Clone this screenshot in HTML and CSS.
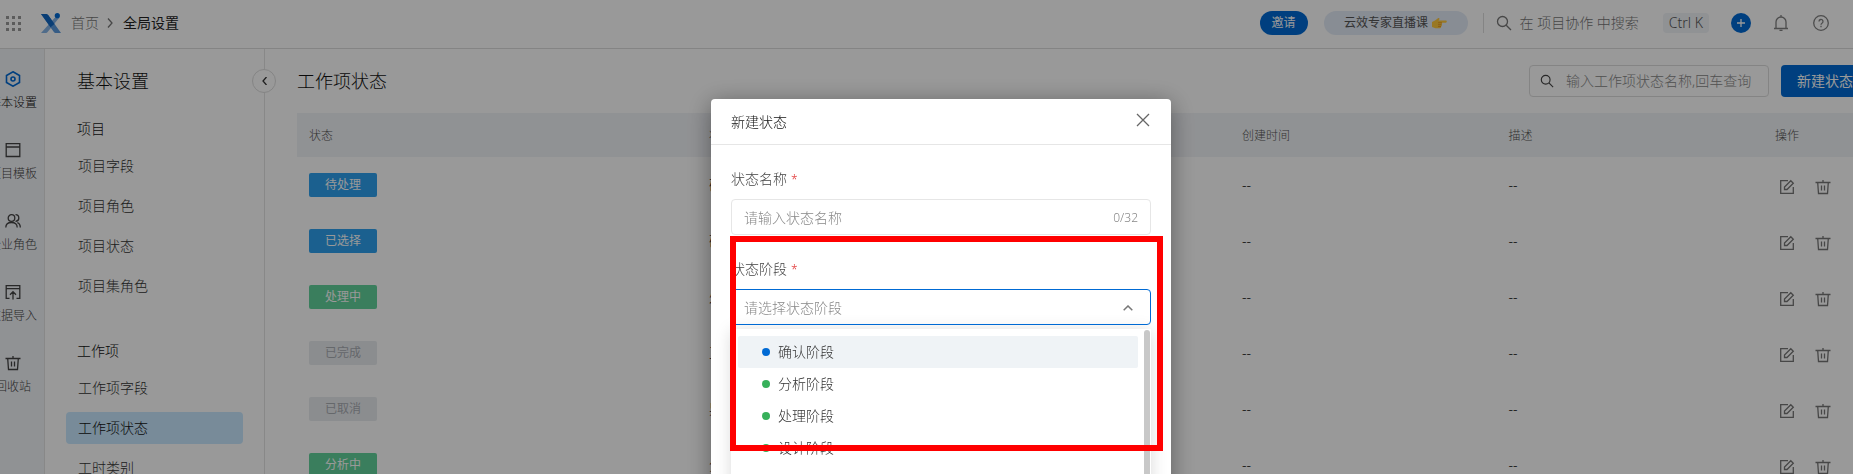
FILE: index.html
```html
<!DOCTYPE html>
<html lang="zh-CN">

<head>
    <meta charset="utf-8">
    <title>全局设置</title>
    <link rel="stylesheet" href="styles.css">
</head>

<body>
    <!-- 公用图标 -->
    <svg class="sprite" aria-hidden="true">
        <symbol id="i-search" viewBox="0 0 16 16"><circle cx="6.5" cy="6.5" r="5"/><path d="M10.2 10.2L15 15"/></symbol>
        <symbol id="i-trash" viewBox="0 0 16 16"><path d="M.5 3.500h15M8 1v2.500M2.700 3.500l.8 11h9l.8-11M6.500 6.500v5M9.500 6.500v5"/></symbol>
        <symbol id="i-edit" viewBox="0 0 16 16"><path d="M9 1.700H1.700v12.600h12.600V8M5.500 10.500V8l6.300-6.300 2.500 2.500L8 10.500z"/></symbol>
    </svg>

    <header class="header">
        <svg class="apps" viewBox="0 0 15 15" aria-hidden="true"><path d="M0 0h3v3H0zM6 0h3v3H6zM12 0h3v3h-3zM0 6h3v3H0zM6 6h3v3H6zM12 6h3v3h-3zM0 12h3v3H0zM6 12h3v3H6zM12 12h3v3h-3z"/></svg>
        <svg class="logo" viewBox="0 0 20 20" aria-hidden="true">
            <path d="M13.500 5H18L7 18.500C6.200 19.500 5.500 20 4.300 20H0z" fill="#86b4e6"/>
            <path d="M0 1h4.500c1.500 0 2.300.5 3 1.500L20 20h-4.500c-1.500 0-2.300-.5-3-1.500z" fill="#5a9ade"/>
            <path d="M0 1h4.500c1.500 0 2.300.5 3 1.500L13.500 11 9.500 14.300z" fill="#1268c4"/>
            <circle cx="16.300" cy="2.700" r="2.600" fill="#006ad4"/>
        </svg>
        <nav class="crumbs">
            <a href="#">首页</a>
            <svg class="crumb-arrow" viewBox="0 0 6 10" aria-hidden="true"><path d="M1 .5L5 5 1 9.500"/></svg>
            <a href="#" class="current">全局设置</a>
        </nav>
        <button class="invite" type="button">邀请</button>
        <a href="#" class="live">云效专家直播课
            <svg class="hand" viewBox="0 0 15 11" aria-hidden="true"><path d="M0 4l3-1.500L6 .3c1-.6 2 .3 1.300 1.200L6.500 2.500h7.300c1.300 0 1.300 2.200 0 2.200H9.500c1 .6.8 1.800 0 2 .6.700.3 1.600-.5 1.800.3.900-.2 1.700-1.200 1.700H3.500L0 9z" fill="#ffc83d"/><path d="M6 4.700h4M6 6.700h3.500M6 8.500h3" stroke="#e08a1e" stroke-width=".7"/></svg>
        </a>
        <button class="global-search" type="button">
            <svg class="icon" aria-hidden="true"><use href="#i-search"/></svg>
            <span>在 项目协作 中搜索</span>
            <kbd>Ctrl K</kbd>
        </button>
        <button class="plus" type="button" aria-label="新建"><svg viewBox="0 0 8 8" aria-hidden="true"><path d="M4 0v8M0 4h8"/></svg></button>
        <button class="icon-btn" type="button" aria-label="通知"><svg class="icon" viewBox="0 0 16 16" aria-hidden="true"><path d="M1 13.500h14M3 13.500V7a5 5 0 0 1 10 0v6.500M8 0v2M6.500 15.500h3"/></svg></button>
        <button class="icon-btn" type="button" aria-label="帮助"><svg class="icon" viewBox="0 0 16 16" aria-hidden="true"><circle cx="8" cy="8" r="7.300"/><path d="M6 6.500a2 2 0 1 1 3 1.700c-.7.400-1 .7-1 1.500M8 10.800v1.400"/></svg></button>
    </header>

    <div class="page">
        <nav class="rail">
            <a href="#" class="active"><svg class="icon" viewBox="0 0 16 16" aria-hidden="true"><path d="M8 .8l6.500 3.700v7L8 15.200l-6.500-3.700v-7z"/><circle cx="8" cy="8" r="2"/></svg>基本设置</a>
            <a href="#"><svg class="icon" viewBox="0 0 16 16" aria-hidden="true"><path d="M1.200 1.700h13.600v12.800H1.200zM1.200 5h13.600"/></svg>项目模板</a>
            <a href="#"><svg class="icon" viewBox="0 0 16 16" aria-hidden="true"><circle cx="6.500" cy="5" r="3.300"/><path d="M.8 14.500c0-3.200 2-5 5.700-5s5.700 1.800 5.700 5M10.500 1.700a3.300 3.300 0 0 1 0 6.600M12.300 9.700c2 .7 3 2.300 3 4.800"/></svg>企业角色</a>
            <a href="#"><svg class="icon" viewBox="0 0 16 16" aria-hidden="true"><path d="M4.500 14.300H1.200V1.700h13.600v12.600h-3.300M1.200 4.700h13.600M8 15.500V8M5 10.700L8 7.700l3 3"/></svg>数据导入</a>
            <a href="#"><svg class="icon" aria-hidden="true"><use href="#i-trash"/></svg>回收站</a>
        </nav>

        <aside class="sidebar">
            <h2>基本设置</h2>
            <button class="toggle" type="button" aria-label="收起"><svg viewBox="0 0 5 8" aria-hidden="true"><path d="M4.500 0L1 4l3.500 4"/></svg></button>
            <h3>项目</h3>
            <ul>
                <li><a href="#">项目字段</a></li>
                <li><a href="#">项目角色</a></li>
                <li><a href="#">项目状态</a></li>
                <li><a href="#">项目集角色</a></li>
            </ul>
            <h3>工作项</h3>
            <ul>
                <li><a href="#">工作项字段</a></li>
                <li><a href="#" class="active">工作项状态</a></li>
                <li><a href="#">工时类别</a></li>
            </ul>
        </aside>

        <main class="main">
            <div class="toolbar">
                <h1>工作项状态</h1>
                <label class="search">
                    <svg class="icon" aria-hidden="true"><use href="#i-search"/></svg>
                    <input type="text" aria-label="搜索状态" placeholder="输入工作项状态名称,回车查询">
                </label>
                <button class="primary" type="button">新建状态</button>
            </div>
            <table class="list">
                <colgroup>
                    <col class="col-status"><col><col><col><col><col class="col-action">
                </colgroup>
                <thead>
                    <tr><th>状态</th><th>状态阶段</th><th></th><th>创建时间</th><th>描述</th><th>操作</th></tr>
                </thead>
                <tbody>
                    <tr>
                        <td><span class="tag blue">待处理</span></td><td>确认阶段</td><td></td><td>--</td><td>--</td>
                        <td><div class="actions"><button type="button" aria-label="编辑"><svg class="icon"><use href="#i-edit"/></svg></button><button type="button" aria-label="删除"><svg class="icon"><use href="#i-trash"/></svg></button></div></td>
                    </tr>
                    <tr>
                        <td><span class="tag blue">已选择</span></td><td>确认阶段</td><td></td><td>--</td><td>--</td>
                        <td><div class="actions"><button type="button" aria-label="编辑"><svg class="icon"><use href="#i-edit"/></svg></button><button type="button" aria-label="删除"><svg class="icon"><use href="#i-trash"/></svg></button></div></td>
                    </tr>
                    <tr>
                        <td><span class="tag green">处理中</span></td><td>处理阶段</td><td></td><td>--</td><td>--</td>
                        <td><div class="actions"><button type="button" aria-label="编辑"><svg class="icon"><use href="#i-edit"/></svg></button><button type="button" aria-label="删除"><svg class="icon"><use href="#i-trash"/></svg></button></div></td>
                    </tr>
                    <tr>
                        <td><span class="tag gray">已完成</span></td><td>正常结束</td><td></td><td>--</td><td>--</td>
                        <td><div class="actions"><button type="button" aria-label="编辑"><svg class="icon"><use href="#i-edit"/></svg></button><button type="button" aria-label="删除"><svg class="icon"><use href="#i-trash"/></svg></button></div></td>
                    </tr>
                    <tr>
                        <td><span class="tag gray">已取消</span></td><td>异常结束</td><td></td><td>--</td><td>--</td>
                        <td><div class="actions"><button type="button" aria-label="编辑"><svg class="icon"><use href="#i-edit"/></svg></button><button type="button" aria-label="删除"><svg class="icon"><use href="#i-trash"/></svg></button></div></td>
                    </tr>
                    <tr>
                        <td><span class="tag green">分析中</span></td><td>分析阶段</td><td></td><td>--</td><td>--</td>
                        <td><div class="actions"><button type="button" aria-label="编辑"><svg class="icon"><use href="#i-edit"/></svg></button><button type="button" aria-label="删除"><svg class="icon"><use href="#i-trash"/></svg></button></div></td>
                    </tr>
                </tbody>
            </table>
        </main>
    </div>

    <!-- 新建状态弹窗 -->
    <div class="mask">
        <form class="modal" role="dialog" aria-labelledby="modal-title">
            <div class="modal-head">
                <h2 id="modal-title">新建状态</h2>
                <button class="close" type="button" aria-label="关闭"><svg viewBox="0 0 14 14" aria-hidden="true"><path d="M1 1l12 12M13 1L1 13"/></svg></button>
            </div>
            <div class="modal-body">
                <label class="field-label" for="status-name">状态名称<i>*</i></label>
                <div class="field">
                    <input id="status-name" type="text" maxlength="32" placeholder="请输入状态名称">
                    <span class="count">0/32</span>
                </div>
                <label class="field-label" for="status-stage">状态阶段<i>*</i></label>
                <div class="field open">
                    <select id="status-stage">
                        <option>请选择状态阶段</option>
                    </select>
                    <svg class="arrow" viewBox="0 0 10 6" aria-hidden="true"><path d="M.7 5.300L5 1l4.300 4.300"/></svg>
                </div>
                <div class="dropdown">
                    <ul>
                        <li class="hover"><span class="dot dot-blue"></span>确认阶段</li>
                        <li><span class="dot"></span>分析阶段</li>
                        <li><span class="dot"></span>处理阶段</li>
                        <li><span class="dot"></span>设计阶段</li>
                    </ul>
                    <div class="scrollbar"></div>
                </div>
                <div class="highlight"></div>
            </div>
        </form>
    </div>
</body>

</html>
```
FILE: styles.css
```css
* {
    box-sizing: border-box;
}

body {
    margin: 0;
    height: 100vh;
    overflow: hidden;
    background: #fff;
    color: #333;
    font: 300 14px/20px "Noto Sans", "Noto Sans CJK SC", sans-serif;
}

h1, h2, h3, ul {
    margin: 0;
    padding: 0;
    font-weight: inherit;
    list-style: none;
}

a {
    color: inherit;
    text-decoration: none;
}

button, input, select {
    margin: 0;
    padding: 0;
    border: 0;
    background: none;
    color: inherit;
    font: inherit;
    outline: 0;
}

::placeholder {
    color: #888;
    opacity: 1;
}

svg {
    display: block;
    flex: none;
    fill: none;
    stroke: currentColor;
    stroke-width: 1.3;
}

.sprite {
    position: absolute;
    width: 0;
    height: 0;
}

.icon {
    width: 16px;
    height: 16px;
}

/* 顶部导航 */
.header {
    display: flex;
    align-items: center;
    height: 49px;
    padding: 0 24px 2px 6px;
    border-bottom: 1px solid #dcdcdc;
}

.apps {
    width: 15px;
    height: 15px;
    margin-right: 20px;
    fill: #999;
    stroke: none;
}

.logo {
    width: 20px;
    height: 20px;
    margin-right: 10px;
    stroke: none;
}

.crumbs {
    display: flex;
    align-items: center;
    gap: 8px;
    margin-right: auto;
    color: #777;
}

.crumbs .current {
    margin-left: 2px;
    color: #222;
    font-weight: 400;
}

.crumb-arrow {
    width: 6px;
    height: 10px;
}

.invite {
    width: 48px;
    height: 24px;
    border-radius: 12px;
    background: #006ad4;
    color: #fff;
    font-size: 12px;
    font-weight: 400;
}

.live {
    display: flex;
    align-items: center;
    justify-content: center;
    gap: 4px;
    width: 144px;
    height: 24px;
    margin: 0 15px 0 16px;
    border-radius: 12px;
    background: #e3ebf7;
    color: #555;
    font-size: 12px;
    font-weight: 400;
}

.hand {
    width: 15px;
    height: 11px;
    stroke: none;
}

.global-search {
    display: flex;
    align-items: center;
    height: 20px;
    padding-left: 12px;
    border-left: 1px solid #ddd;
    color: #777;
}

.global-search span {
    margin: 0 24px 0 8px;
}

kbd {
    padding: 0 6px;
    border-radius: 4px;
    background: #f1f3f7;
    color: #555;
    font: inherit;
}

.plus {
    display: grid;
    place-items: center;
    width: 20px;
    height: 20px;
    margin-left: 22px;
    border-radius: 50%;
    background: #006ad4;
    color: #fff;
}

.plus svg {
    width: 8px;
    height: 8px;
}

.icon-btn {
    margin-left: 22px;
    color: #808080;
}

.icon-btn + .icon-btn {
    margin-left: 24px;
}

/* 页面主体比窗口略宽，向左滚动了一段 */
.page {
    display: flex;
    height: calc(100vh - 49px);
    margin: 0 -16px 0 -18px;
}

.rail {
    display: flex;
    flex: none;
    flex-direction: column;
    align-items: center;
    gap: 29px;
    width: 63px;
    padding-top: 22px;
    border-right: 1px solid #e3e3e3;
    background: #f1f3f7;
    color: #444;
    font-size: 12px;
}

.rail a {
    display: flex;
    flex-direction: column;
    align-items: center;
    gap: 6px;
}

.rail .active {
    color: #111;
}

.rail .active svg {
    color: #006ad4;
    stroke-width: 1.6;
}

.sidebar {
    position: relative;
    flex: none;
    width: 220px;
    padding: 20px 21px 0;
    border-right: 1px solid #e3e3e3;
}

.sidebar h2, .toolbar h1 {
    color: #111;
    font-size: 18px;
    line-height: 24px;
}

.sidebar h2 {
    padding-left: 11px;
}

.sidebar h3 {
    padding: 26px 11px 11px;
    color: #111;
    font-size: 14px;
}

.sidebar ul {
    display: grid;
    gap: 8px;
    margin-bottom: 13px;
}

.sidebar li a {
    display: block;
    padding: 6px 12px;
    border-radius: 4px;
}

.sidebar .active {
    background: #c8e8ff;
    color: #111;
}

.toggle {
    position: absolute;
    top: 20px;
    right: -12px;
    display: grid;
    place-items: center;
    width: 24px;
    height: 24px;
    border: 1px solid #ddd;
    border-radius: 50%;
    background: #fff;
}

.toggle svg {
    width: 5px;
    height: 8px;
}

/* 状态列表 */
.main {
    flex: 1;
    min-width: 0;
    padding: 16px 0 0 32px;
}

.toolbar {
    display: flex;
    align-items: center;
    margin-bottom: 16px;
}

.toolbar h1 {
    margin-right: auto;
}

.search {
    display: flex;
    align-items: center;
    gap: 12px;
    width: 240px;
    height: 32px;
    padding: 0 10px;
    border: 1px solid #ddd;
    border-radius: 4px;
}

.search .icon {
    width: 14px;
    height: 14px;
    color: #444;
}

.search input {
    flex: 1;
    min-width: 0;
}

.primary {
    width: 88px;
    height: 32px;
    margin-left: 12px;
    border-radius: 4px;
    background: #006ad4;
    color: #fff;
    font-weight: 400;
}

.list {
    width: 100%;
    border-collapse: collapse;
    table-layout: fixed;
}

.col-status {
    width: 400px;
}

.col-action {
    width: 106px;
}

.list th {
    height: 44px;
    padding: 2px 12px 0;
    background: #f1f3f7;
    color: #555;
    font-size: 12px;
    font-weight: 300;
    text-align: left;
}

.list td {
    height: 56px;
    padding: 0 12px;
    color: #111;
}

.tag {
    display: block;
    width: 68px;
    border-radius: 2px;
    font-size: 12px;
    font-weight: 400;
    line-height: 24px;
    text-align: center;
}

.blue {
    background: #2ea1ee;
    color: #fff;
}

.green {
    background: #62d29c;
    color: #fff;
}

.gray {
    background: #e8ebef;
    color: #a8adb3;
}

.actions {
    display: flex;
    gap: 20px;
    padding: 4px 0 0 4px;
    color: #777;
}

/* 弹窗 */
.mask {
    position: fixed;
    inset: 0;
    display: flex;
    justify-content: center;
    padding: 99px 0 0 29px;
    background: rgba(0, 0, 0, .4);
}

.modal {
    width: 460px;
    height: 560px;
    border-radius: 4px;
    background: #fff;
    box-shadow: 0 4px 24px rgba(0, 0, 0, .4);
}

.modal-head {
    display: flex;
    align-items: center;
    justify-content: space-between;
    height: 46px;
    padding: 0 21px 0 20px;
    border-bottom: 1px solid #e6e6e6;
}

.modal-head h2 {
    color: #111;
    font-size: 14px;
}

.close {
    padding-bottom: 3px;
    color: #666;
}

.close svg {
    width: 14px;
    height: 14px;
}

.modal-body {
    position: relative;
    padding: 24px 20px;
}

.field-label {
    display: block;
    margin-bottom: 10px;
    color: #444;
}

.field-label i {
    margin-left: 4px;
    color: #e02d2d;
    font-size: 12px;
    font-style: normal;
    line-height: 1;
}

.field {
    position: relative;
    display: flex;
    align-items: center;
    height: 36px;
    margin-bottom: 24px;
    padding: 1px 12px 0;
    border: 1px solid #e6e6e6;
    border-radius: 4px;
}

.field input, .field select {
    flex: 1;
    min-width: 0;
    appearance: none;
}

.field select, .count {
    color: #888;
}

.count {
    font-size: 12px;
}

.field.open {
    margin-bottom: 4px;
    border-color: #006ad4;
}

.arrow {
    width: 10px;
    height: 6px;
    margin-right: 5px;
    color: #777;
    stroke-width: 1.5;
}

.dropdown {
    display: flex;
    justify-content: space-between;
    height: 240px;
    padding: 1px 1px 0 7px;
    background: #fff;
    box-shadow: 0 2px 16px rgba(0, 0, 0, .15);
}

.dropdown ul {
    width: 400px;
    padding-top: 6px;
}

.dropdown li {
    display: flex;
    align-items: center;
    gap: 8px;
    height: 32px;
    padding-left: 24px;
    border-radius: 2px;
}

.dropdown .hover {
    background: #eff3f6;
}

.dot {
    width: 8px;
    height: 8px;
    border-radius: 50%;
    background: #37b05a;
}

.dot-blue {
    background: #006ad4;
}

.scrollbar {
    width: 6px;
    border-radius: 3px;
    background: #c8c8c8;
}

/* 红色标注框 */
.highlight {
    position: absolute;
    top: 91px;
    right: 8px;
    left: 19px;
    height: 215px;
    border: 6px solid #f00;
}
```
